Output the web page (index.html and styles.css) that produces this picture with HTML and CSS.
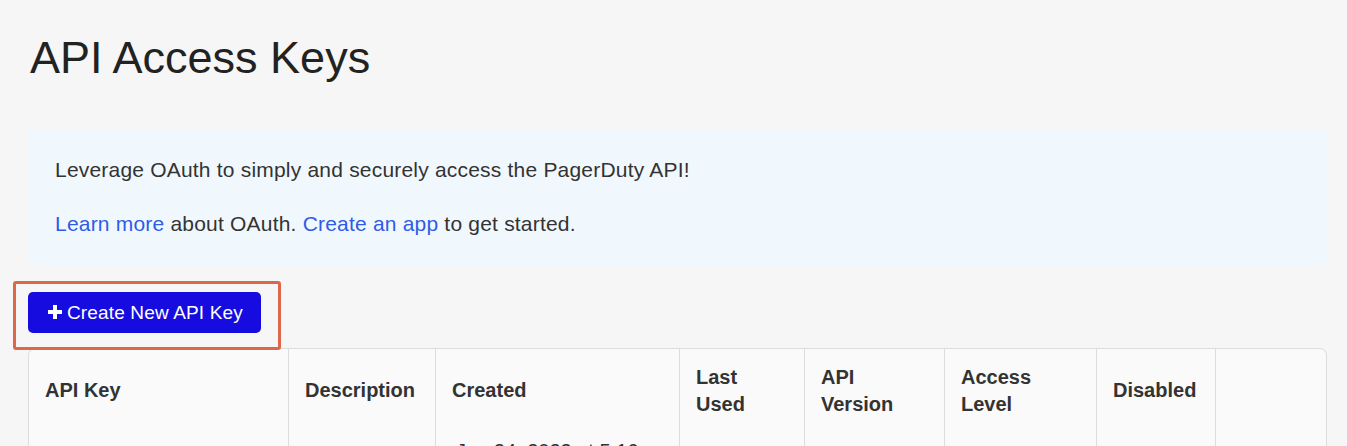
FILE: index.html
```html
<!DOCTYPE html>
<html lang="en">
<head>
<meta charset="utf-8">
<title>API Access Keys</title>
<link rel="stylesheet" href="styles.css">
</head>
<body>
<main class="page">
  <h1 class="title">API Access Keys</h1>

  <section class="info">
    <p>Leverage OAuth to simply and securely access the PagerDuty API!</p>
    <p><a href="#">Learn more</a> about OAuth. <a href="#">Create an app</a> to get started.</p>
  </section>

  <div class="actions">
    <button class="btn-primary" type="button">
      <svg class="plus" width="14" height="14" viewBox="0 0 14 14" aria-hidden="true">
        <path d="M5 0h4v5h5v4H9v5H5V9H0V5h5z" fill="#fff"/>
      </svg>
      <span>Create New API Key</span>
    </button>
    <span class="highlight"></span>
  </div>

  <table class="keys">
    <colgroup>
      <col class="c1"><col class="c2"><col class="c3"><col class="c4">
      <col class="c5"><col class="c6"><col class="c7"><col class="c8">
    </colgroup>
    <thead>
      <tr>
        <th>API Key</th>
        <th>Description</th>
        <th>Created</th>
        <th>Last<br>Used</th>
        <th>API<br>Version</th>
        <th>Access<br>Level</th>
        <th>Disabled</th>
        <th></th>
      </tr>
    </thead>
    <tbody>
      <tr>
        <td></td>
        <td></td>
        <td class="date">Jan 24, 2023 at 5:16 PM</td>
        <td></td>
        <td></td>
        <td></td>
        <td></td>
        <td></td>
      </tr>
    </tbody>
  </table>
</main>
</body>
</html>
```

FILE: styles.css
```css
html, body {
  margin: 0;
  padding: 0;
  background: #f6f6f6;
  font-family: "Liberation Sans", Arial, sans-serif;
  color: #333;
  overflow: hidden;
}

.page {
  padding: 0 20px 0 28px;
}

.title {
  margin: 0;
  padding: 30px 0 0 2px;
  font-size: 45px;
  line-height: 56px;
  font-weight: normal;
  color: #222;
}

.info {
  margin-top: 44px;
  background: #f0f8fe;
  border-radius: 7px;
  padding: 25px 27px 26px;
}

.info p {
  margin: 0;
  font-size: 21px;
  line-height: 30px;
  letter-spacing: 0.2px;
  color: #333;
}

.info p + p {
  margin-top: 24px;
}

.info a {
  color: #2f5be6;
  text-decoration: none;
}

.actions {
  position: relative;
  margin-top: 27px;
  height: 41px;
}

.btn-primary {
  display: inline-flex;
  align-items: center;
  gap: 5px;
  height: 41px;
  width: 233px;
  padding: 0 0 0 20px;
  border: none;
  border-radius: 5px;
  background: #160ce0;
  color: #fff;
  font-family: "Liberation Sans", Arial, sans-serif;
  font-size: 19px;
  letter-spacing: 0.15px;
  cursor: pointer;
}

.plus {
  flex: none;
  margin-top: -1px;
}

.highlight {
  position: absolute;
  left: -15px;
  top: -11px;
  width: 262px;
  height: 63px;
  border: 3px solid #dc6849;
  border-radius: 3px;
  pointer-events: none;
}

.keys {
  margin-top: 15px;
  width: 1299px;
  table-layout: fixed;
  border-collapse: separate;
  border-spacing: 0;
  background: #fafafa;
  border: 1px solid #dddddd;
  border-bottom: none;
  border-radius: 7px 7px 0 0;
}

.c1 { width: 259px; }
.c2 { width: 147px; }
.c3 { width: 244px; }
.c4 { width: 125px; }
.c5 { width: 140px; }
.c6 { width: 152px; }
.c7 { width: 119px; }
.c8 { width: auto; }

.keys th,
.keys td {
  border-left: 1px solid #dddddd;
  text-align: left;
  padding: 0 16px;
  font-size: 20px;
  line-height: 27px;
  color: #333;
}

.keys th:first-child,
.keys td:first-child {
  border-left: none;
}

.keys th {
  height: 83px;
  font-weight: bold;
  vertical-align: middle;
}

.keys td {
  height: 60px;
  vertical-align: top;
  padding-top: 6px;
}

.keys td.date {
  padding-left: 20px;
}
```
